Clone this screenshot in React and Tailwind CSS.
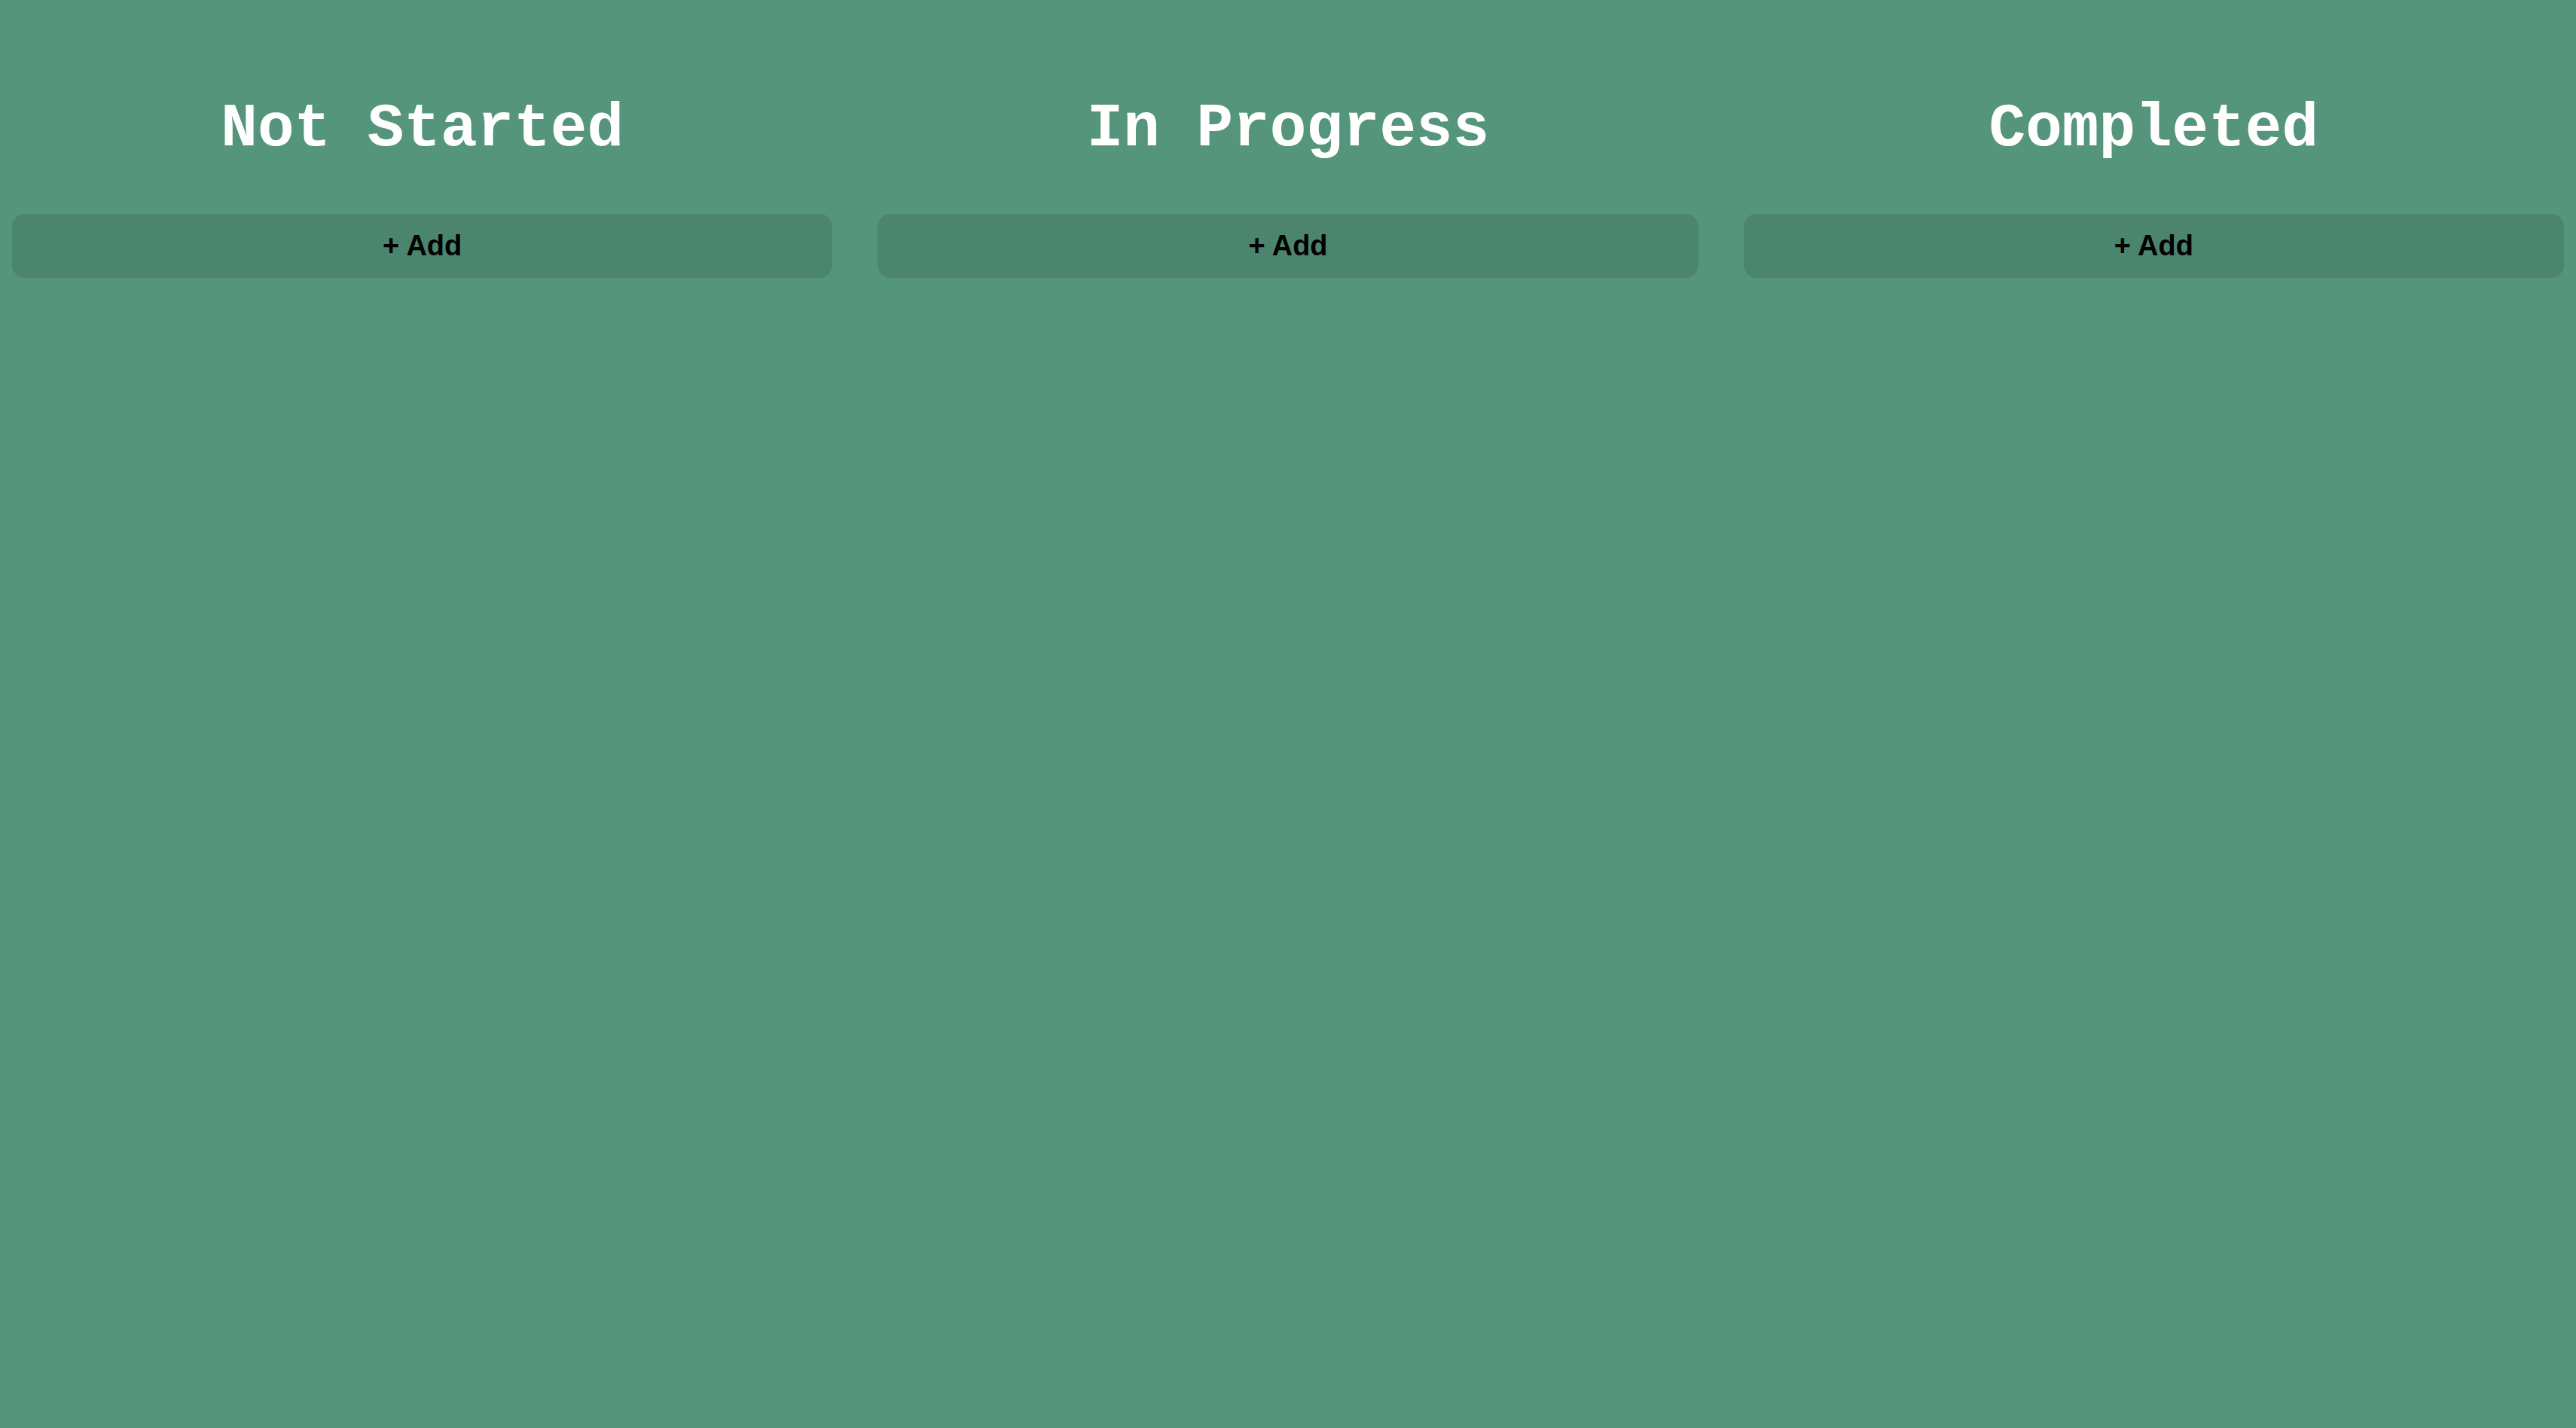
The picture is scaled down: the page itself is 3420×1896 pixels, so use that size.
const columns = ["Not Started", "In Progress", "Completed"];

function Column({ title }) {
	return (
		<div className="flex flex-col">
			<h1 className="text-center text-white font-bold text-[81px] leading-[82px] font-['Liberation_Mono','Courier_New',monospace]">
				{title}
			</h1>
			<button
				type="button"
				className="mt-[71px] h-[85px] w-full rounded-[17px] bg-black/10 text-[38px] font-bold text-black font-['Liberation_Sans',Arial,sans-serif]"
			>
				+ Add
			</button>
		</div>
	);
}

export default function App() {
	return (
		<div className="min-h-screen w-full bg-[#55957b] px-4 pt-[131px]">
			<div className="grid grid-cols-3 gap-[60px]">
				{columns.map((c) => (
					<Column key={c} title={c} />
				))}
			</div>
		</div>
	);
}
